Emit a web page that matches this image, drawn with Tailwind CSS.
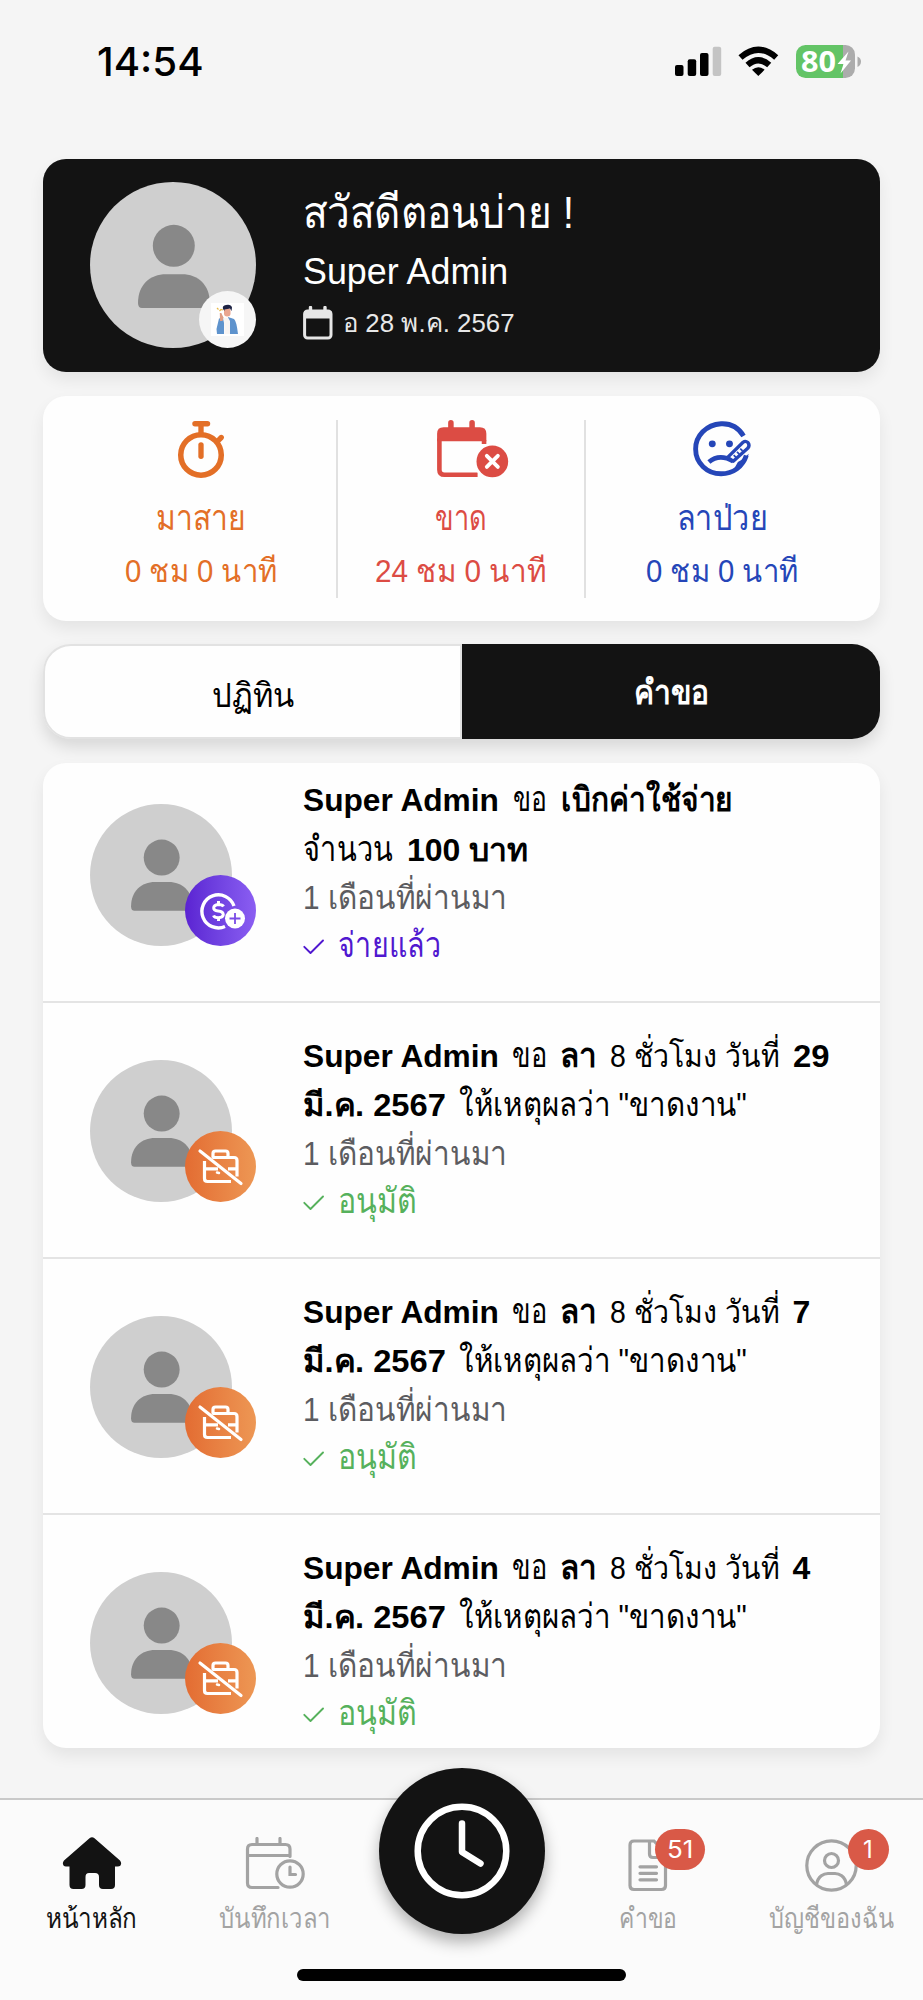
<!DOCTYPE html>
<html lang="th">
<head>
<meta charset="utf-8">
<title>หน้าหลัก</title>
<script src="https://cdn.jsdelivr.net/npm/@tailwindcss/browser@4"></script>
</head>
<body class="bg-[#f5f5f5]">
<svg class="hidden">
  <symbol id="person" viewBox="0 0 166 166">
    <circle cx="83.8" cy="63.8" r="21" fill="#888"/>
    <path d="M52 126Q48 126 48 121C48 103 60 92.3 76 92.3H92C108 92.3 119.8 103 119.8 121Q119.8 126 115.8 126Z" fill="#888"/>
  </symbol>
  <symbol id="check" viewBox="0 0 21 16">
    <path d="M1.3 7.8L7.5 14L20 1.5" fill="none" stroke="currentColor" stroke-width="1.9" stroke-linecap="round" stroke-linejoin="round"/>
  </symbol>
  <symbol id="nowork" viewBox="0 0 71 71">
    <g fill="none" stroke="#fff" stroke-width="3.2" stroke-linejoin="round" stroke-linecap="round">
      <path d="M28 26V22.5Q28 20 30.500 20H40.500Q43 20 43 22.500V26"/>
      <path d="M27.500 26.500H49Q52 26.500 52 29.500V45.500M46 50.500H22.500Q19.500 50.500 19.500 47.500V30" stroke-linecap="butt"/>
      <path d="M20 37.800H33M43 37.800H52" stroke-linecap="butt"/>
      <path d="M32 41.500L34 42" stroke-width="2.500"/>
      <path d="M15 20L56 52.500"/>
    </g>
  </symbol>
</svg>

<div class="relative flex h-[2000px] w-[923px] flex-col overflow-hidden font-['Liberation_Sans',sans-serif] text-black">

  <!-- status bar -->
  <header class="flex h-[124px] shrink-0 items-center justify-between pl-[97px] pr-[61px]">
    <div class="font-['Inter',sans-serif] text-[39.500px] font-medium leading-[50px]"><span data-w="107">14:54</span></div>
    <svg width="188" height="36" viewBox="674 44 188 36">
      <rect x="675" y="65" width="8.500" height="11" rx="2"/>
      <rect x="687.700" y="59.300" width="8.500" height="16.700" rx="2"/>
      <rect x="700" y="53" width="8.500" height="23" rx="2"/>
      <rect x="712.700" y="46.700" width="8.500" height="29.300" rx="2" fill="#c4c4c4"/>
      <path d="M758.300 76L752 69.800Q758.300 64.500 764.600 69.800Z"/>
      <g fill="none" stroke="#000" stroke-width="6.200">
        <path d="M740.500 57.500Q758.300 42 776.200 57.500"/>
        <path d="M747.500 65Q758.300 55.500 769.200 65"/>
      </g>
      <clipPath id="bat"><rect x="796" y="45" width="59" height="33" rx="9.500"/></clipPath>
      <g clip-path="url(#bat)"><rect x="796" y="45" width="47" height="33" fill="#63c466"/><rect x="843" y="45" width="12" height="33" fill="#acacac"/></g>
      <path d="M857.500 56.500Q861 58 861 61.500T857.500 67Z" fill="#acacac"/>
      <text x="801" y="71.500" font-size="29" font-weight="700" font-family="Open Sans" textLength="35" lengthAdjust="spacingAndGlyphs" fill="#fff">80</text>
      <path d="M848.500 51.500L837.500 64H843.500L840.500 73.500L851 60.500H845.500Z" fill="#fff"/>
    </svg>
  </header>

  <main class="flex flex-col px-[43px] pt-[35px]">
    <!-- greeting -->
    <section class="flex h-[213px] rounded-[23px] bg-[#131313] pl-[47px] pt-[23px] text-white shadow-[0_8px_16px_rgba(0,0,0,0.07)]">
      <div class="relative size-[166px] shrink-0 rounded-full bg-[#cfcfcf]">
        <svg class="size-full"><use href="#person"/></svg>
        <div class="absolute bottom-0 right-0 flex size-[57px] items-center justify-center rounded-full bg-[#f6f6f6]">
          <svg width="33" height="33" viewBox="0 0 33 33">
            <rect width="33" height="33" fill="#fff"/>
            <path d="M6 31L5.500 26L8 15.500L12 15L13 20V31ZM17 14L23 16Q25.500 18 27 31H17Z" fill="#5e93cd"/>
            <path d="M13 15L17 14.500L19 18V31H13.500Z" fill="#f8f4f2"/>
            <rect x="13" y="5" width="6.500" height="8.500" rx="3" fill="#e9a58f"/>
            <path d="M9 18L8.800 10L10.300 10L12.500 14.500L11.500 18Z" fill="#dd9d85"/>
            <path d="M12 6Q11 2.500 15 2Q20 1 21 4.500L20.500 8L19 5.500L13.500 6.500V8Z" fill="#1e2344"/>
            <path d="M6 5L7.500 6.500M8.500 8L10 6.500L12 7" stroke="#e8b845" stroke-width="1.200" fill="none"/>
          </svg>
        </div>
      </div>
      <div class="ml-[47px] flex flex-col">
        <div class="-mt-px h-[66px] text-[45px] leading-[64px]"><span data-w="271">สวัสดีตอนบ่าย !</span></div>
        <div class="h-[50px] text-[36px] leading-[50px]"><span data-w="205">Super Admin</span></div>
        <div class="mt-[3px] flex h-[46px] items-center text-[25.500px] leading-[46px] text-[#e8e8e8]">
          <svg class="mr-[10px]" width="30" height="34" viewBox="0 0 30 34"><path d="M7.500 1.500V6M22 1.500V6" stroke="#e6e6e6" stroke-width="3.400" stroke-linecap="round"/><rect x="1.600" y="5" width="26.400" height="27" rx="3" fill="none" stroke="#e6e6e6" stroke-width="3"/><path d="M1 5H28.500V12.500H1Z" fill="#e6e6e6"/></svg>
          <span data-w="172">อ 28 พ.ค. 2567</span>
        </div>
      </div>
    </section>

    <!-- summary -->
    <section class="mt-[24px] flex h-[225px] items-center rounded-[23px] bg-[#fefefe] text-[32px] shadow-[0_8px_16px_rgba(0,0,0,0.07)]">
      <div class="flex h-[178px] w-[295px] flex-col items-center border-r-[2px] border-[#e1e1e1] pl-[23px] text-[#e36f27]">
        <svg width="52" height="63" viewBox="0 0 52 63" fill="none" stroke="currentColor" stroke-linecap="round"><circle cx="26" cy="38" r="22" stroke-width="6"/><path d="M19.500 4H33" stroke-width="6"/><path d="M26 5V14M45.500 21.500L48 19" stroke-width="5.800"/><path d="M26 27V39.500" stroke-width="5.800"/></svg>
        <div class="mt-[10px] h-[58px] text-[35px] leading-[60px]"><span data-w="90">มาสาย</span></div>
        <div class="-mt-[6px] h-[58px] leading-[62px]"><span data-w="152">0 ชม 0 นาที</span></div>
      </div>
      <div class="flex h-[178px] w-[248px] flex-col items-center border-r-[2px] border-[#e1e1e1] text-[#dc4c44]">
        <svg class="ml-[24px]" width="78" height="63" viewBox="0 0 78 63"><path d="M15 3V10M38 3V10" stroke="currentColor" stroke-width="6" stroke-linecap="round"/><path d="M2.500 20V54Q2.500 59.500 8 59.500H44M51 22V26" fill="none" stroke="currentColor" stroke-width="5"/><path d="M0 23V15Q0 8 7 8H46.500Q53.500 8 53.500 15V23Z" fill="currentColor"/><circle cx="60" cy="45" r="20" fill="#fefefe"/><circle cx="60" cy="45" r="17.200" fill="currentColor"/><path d="M54 39L66 51M66 39L54 51" stroke="#fff" stroke-width="4.200" stroke-linecap="round"/></svg>
        <div class="mt-[10px] h-[58px] text-[35px] leading-[60px]"><span data-w="52">ขาด</span></div>
        <div class="-mt-[6px] h-[58px] leading-[62px]"><span data-w="171">24 ชม 0 นาที</span></div>
      </div>
      <div class="flex h-[178px] flex-1 flex-col items-center pr-[22px] text-[#2546b8]">
        <svg width="62" height="62" viewBox="0 0 62 62" fill="none" stroke="currentColor"><path d="M54 17C48 7 39 3.500 30 4C14 5 2.800 17 2.800 31C2.800 46 15 57.500 30 57.500C43 57.500 53 50 57 38" stroke-width="5.200"/><path d="M59.500 36Q54 42 48 45L44 52C52 50 58.500 43 59.500 36Z" fill="currentColor" stroke="none"/><circle cx="20.600" cy="25.500" r="3.700" fill="currentColor" stroke="none"/><circle cx="39" cy="25.500" r="3.700" fill="currentColor" stroke="none"/><path d="M17 45Q28 35.500 43 44" stroke-width="5"/><path d="M37 40L53.500 23.800Q56 21.800 58.700 24Q61 26.800 58.800 30L43 44Z" fill="#fefefe" stroke-width="3.600" stroke-linejoin="round"/><path d="M43.500 37.500L46 40M47 34L49.500 36.500M50.500 30.500L53 33" stroke-width="1.800"/></svg>
        <div class="mt-[10px] h-[58px] text-[35px] leading-[60px]"><span data-w="91">ลาป่วย</span></div>
        <div class="-mt-[6px] h-[58px] leading-[62px]"><span data-w="152">0 ชม 0 นาที</span></div>
      </div>
    </section>

    <!-- tabs -->
    <section class="mt-[23px] flex h-[95px] items-stretch rounded-[28px] text-[34px] shadow-[0_8px_16px_rgba(0,0,0,0.12)]">
      <div class="flex w-[419px] items-center justify-center rounded-l-[28px] border-[2px] border-[#e2e2e2] bg-[#fefefe] pt-[7px] leading-[58px]"><span data-w="82">ปฏิทิน</span></div>
      <div class="flex w-[418px] items-center justify-center rounded-r-[28px] bg-[#131313] font-bold leading-[58px] text-white"><span data-w="75">คำขอ</span></div>
    </section>

    <!-- requests -->
    <section class="mt-[24px] h-[985px] overflow-hidden rounded-[23px] bg-[#fefefe] text-[32px] leading-[49.500px] shadow-[0_8px_16px_rgba(0,0,0,0.07)]">
      <article class="-mt-[16px] flex h-[256px] border-b-[2px] border-[#e4e4e4] pl-[47px]">
        <div class="relative mt-[57px] h-[142px] w-[166px] shrink-0">
          <div class="size-[142px] rounded-full bg-[#cfcfcf]"><svg class="size-full -translate-y-px"><use href="#person"/></svg></div>
          <div class="absolute bottom-0 right-0 size-[71px] rounded-full bg-linear-to-r from-[#5b22d2] to-[#8b5ef2]">
            <svg class="size-full" viewBox="0 0 71 71" fill="none" stroke="#fff"><path d="M49 31A16.500 16.500 0 1 0 40 51.500" stroke-width="3.400"/><path d="M38.500 31.500Q37.500 29.500 33.500 29.500Q28.700 30 28.700 33Q28.700 35.500 33 36Q38.300 36.500 38.300 39.700Q38 42.500 33.500 42.800Q29.500 42.800 28.500 40.500M33.500 26V29M33.500 43V46" stroke-width="3"/><circle cx="50" cy="43.500" r="10" fill="#fff" stroke="none"/><path d="M50 38V49M44.500 43.500H55.500" stroke="#7a4be6" stroke-width="1.800"/></svg>
          </div>
        </div>
        <div class="ml-[47px] pt-[27px]">
          <div class="flex h-[49.500px] items-baseline gap-[14px]"><b data-w="196">Super Admin</b><span class="text-[35px]" data-w="34">ขอ</span><b class="text-[34px]" data-w="172">เบิกค่าใช้จ่าย</b></div>
          <div class="flex h-[49.500px] items-baseline gap-[14px]"><span class="text-[35px]" data-w="90">จำนวน</span><b data-w="121">100 บาท</b></div>
          <div class="flex h-[49.500px] text-[33px] text-[#5c5c60]"><span data-w="205">1 เดือนที่ผ่านมา</span></div>
          <div class="flex h-[48px] text-[35px] leading-[43px] text-[#5018d0]"><svg class="mr-[14px] mt-[16px] h-[16px] w-[21px]"><use href="#check"/></svg><span data-w="103">จ่ายแล้ว</span></div>
        </div>
      </article>

      <article class="flex h-[256px] border-b-[2px] border-[#e4e4e4] pl-[47px]">
        <div class="relative mt-[57px] h-[142px] w-[166px] shrink-0">
          <div class="size-[142px] rounded-full bg-[#cfcfcf]"><svg class="size-full -translate-y-px"><use href="#person"/></svg></div>
          <div class="absolute bottom-0 right-0 size-[71px] rounded-full bg-linear-to-r from-[#e36c32] to-[#ed9754]"><svg class="size-full"><use href="#nowork"/></svg></div>
        </div>
        <div class="ml-[47px] pt-[27px]">
          <div class="flex h-[49.500px] items-baseline gap-[13px]"><b data-w="196">Super Admin</b><span class="text-[35px]" data-w="35">ขอ</span><b class="text-[34px]" data-w="37">ลา</b><span data-w="170">8 ชั่วโมง วันที่</span><b data-w="37">29</b></div>
          <div class="flex h-[49.500px] items-baseline gap-[13px]"><b data-w="143">มี.ค. 2567</b><span class="text-[34px]" data-w="288">ให้เหตุผลว่า "ขาดงาน"</span></div>
          <div class="flex h-[49.500px] text-[33px] text-[#5c5c60]"><span data-w="205">1 เดือนที่ผ่านมา</span></div>
          <div class="flex h-[48px] text-[35px] leading-[43px] text-[#56b15c]"><svg class="mr-[14px] mt-[16px] h-[16px] w-[21px]"><use href="#check"/></svg><span data-w="79">อนุมัติ</span></div>
        </div>
      </article>

      <article class="flex h-[256px] border-b-[2px] border-[#e4e4e4] pl-[47px]">
        <div class="relative mt-[57px] h-[142px] w-[166px] shrink-0">
          <div class="size-[142px] rounded-full bg-[#cfcfcf]"><svg class="size-full -translate-y-px"><use href="#person"/></svg></div>
          <div class="absolute bottom-0 right-0 size-[71px] rounded-full bg-linear-to-r from-[#e36c32] to-[#ed9754]"><svg class="size-full"><use href="#nowork"/></svg></div>
        </div>
        <div class="ml-[47px] pt-[27px]">
          <div class="flex h-[49.500px] items-baseline gap-[13px]"><b data-w="196">Super Admin</b><span class="text-[35px]" data-w="35">ขอ</span><b class="text-[34px]" data-w="37">ลา</b><span data-w="170">8 ชั่วโมง วันที่</span><b data-w="18">7</b></div>
          <div class="flex h-[49.500px] items-baseline gap-[13px]"><b data-w="143">มี.ค. 2567</b><span class="text-[34px]" data-w="288">ให้เหตุผลว่า "ขาดงาน"</span></div>
          <div class="flex h-[49.500px] text-[33px] text-[#5c5c60]"><span data-w="205">1 เดือนที่ผ่านมา</span></div>
          <div class="flex h-[48px] text-[35px] leading-[43px] text-[#56b15c]"><svg class="mr-[14px] mt-[16px] h-[16px] w-[21px]"><use href="#check"/></svg><span data-w="79">อนุมัติ</span></div>
        </div>
      </article>

      <article class="flex h-[256px] pl-[47px]">
        <div class="relative mt-[57px] h-[142px] w-[166px] shrink-0">
          <div class="size-[142px] rounded-full bg-[#cfcfcf]"><svg class="size-full -translate-y-px"><use href="#person"/></svg></div>
          <div class="absolute bottom-0 right-0 size-[71px] rounded-full bg-linear-to-r from-[#e36c32] to-[#ed9754]"><svg class="size-full"><use href="#nowork"/></svg></div>
        </div>
        <div class="ml-[47px] pt-[27px]">
          <div class="flex h-[49.500px] items-baseline gap-[13px]"><b data-w="196">Super Admin</b><span class="text-[35px]" data-w="35">ขอ</span><b class="text-[34px]" data-w="37">ลา</b><span data-w="170">8 ชั่วโมง วันที่</span><b data-w="18">4</b></div>
          <div class="flex h-[49.500px] items-baseline gap-[13px]"><b data-w="143">มี.ค. 2567</b><span class="text-[34px]" data-w="288">ให้เหตุผลว่า "ขาดงาน"</span></div>
          <div class="flex h-[49.500px] text-[33px] text-[#5c5c60]"><span data-w="205">1 เดือนที่ผ่านมา</span></div>
          <div class="flex h-[48px] text-[35px] leading-[43px] text-[#56b15c]"><svg class="mr-[14px] mt-[16px] h-[16px] w-[21px]"><use href="#check"/></svg><span data-w="79">อนุมัติ</span></div>
        </div>
      </article>
    </section>
  </main>

  <!-- bottom navigation -->
  <nav class="relative mt-auto flex h-[202px] shrink-0 border-t-[2px] border-[#c9c9c9] bg-[#fbfbfb] text-[28px] leading-[40px] text-[#a3a3a3]">
    <div class="flex w-[183px] flex-col items-center pt-[37px] text-[#131313]">
      <svg width="60" height="53" viewBox="0 0 60 53" fill="currentColor"><path d="M27.500 1.200Q30 -.5 32.500 1.200L58 23.500Q60 26 58.500 28.500Q57.500 29.500 55.500 29.500H53V48Q53 52 49 52H41Q37 52 37 48V40Q37 36 33 36H27Q23.500 36 23.500 40V48Q23.500 52 19.500 52H11.500Q7.500 52 7.500 48V29.500H4Q2.500 29.500 1.500 28.500Q0 26 2 23.500Z"/></svg>
      <div class="mt-[9px] h-[40px]"><span data-w="91">หน้าหลัก</span></div>
    </div>
    <div class="flex w-[183px] flex-col items-center pt-[37px]">
      <svg width="60" height="53" viewBox="0 0 60 53" fill="none" stroke="currentColor" stroke-width="3.200" stroke-linecap="round"><path d="M12 1.500V7M35 1.500V7M45 19.500V12Q45 7.500 40.500 7.500H7Q2.500 7.500 2.500 12V46Q2.500 50.500 7 50.500H33M2.500 18.500H44"/><circle cx="45" cy="37" r="13.200"/><path d="M45 30V37.500H50.500"/></svg>
      <div class="mt-[9px] h-[40px]"><span data-w="112">บันทึกเวลา</span></div>
    </div>
    <div class="w-[191px]"></div>
    <div class="flex w-[182px] flex-col items-center pt-[39px]">
      <div class="relative">
        <svg width="40" height="53" viewBox="0 0 40 53" fill="none" stroke="currentColor" stroke-width="3.200" stroke-linecap="round"><path d="M26 2H6Q2 2 2 6V46.500Q2 50.500 6 50.500H33.500Q37.500 50.500 37.500 46.500V14L26 2ZM21.500 3V15Q21.500 18.500 25 18.500H37M12 27.800H28.500M12 34.300H28.500M12 40.800H28.500"/></svg>
        <div class="absolute -top-[10px] left-[27px] flex h-[41px] w-[50px] items-center justify-center rounded-full bg-[#d95947] font-['Inter',sans-serif] text-[24px] text-white"><span data-w="26">51</span></div>
      </div>
      <div class="mt-[7px] h-[40px]"><span data-w="58">คำขอ</span></div>
    </div>
    <div class="flex w-[184px] flex-col items-center pt-[39px]">
      <div class="relative">
        <svg width="53" height="53" viewBox="0 0 53 53" fill="none" stroke="currentColor" stroke-width="3.200"><circle cx="26.500" cy="26.500" r="24.700"/><circle cx="26.500" cy="21.500" r="7"/><path d="M11.500 45.500C13 37 19 34.500 23 34.500H30C34 34.500 40 37 41.500 45.500"/></svg>
        <div class="absolute -top-[10px] left-[43px] flex size-[41px] items-center justify-center rounded-full bg-[#d95947] font-['Inter',sans-serif] text-[24px] text-white">1</div>
      </div>
      <div class="mt-[7px] h-[40px]"><span data-w="125">บัญชีของฉัน</span></div>
    </div>
    <div class="absolute -top-[32px] left-[379px] flex size-[166px] items-center justify-center rounded-full bg-[#131313] shadow-[0_8px_16px_rgba(0,0,0,0.3)]">
      <svg width="96" height="96" viewBox="0 0 96 96" fill="none" stroke="#fff" stroke-width="6.500" stroke-linecap="round" stroke-linejoin="round"><circle cx="48" cy="48" r="44.300"/><path d="M48 20.500V49L66.500 60.500"/></svg>
    </div>
    <div class="absolute bottom-[19px] left-[297px] h-[12px] w-[329px] rounded-full bg-black"></div>
  </nav>
</div>

<script>
  // offsetWidth ignores transforms, so refitting after a style change is safe.
  const fit = el => {
    const w = +el.dataset.w, n = el.offsetWidth;
    if (!n) return;
    el.style.transform = 'scaleX(' + w / n + ')';
    el.style.marginRight = (w - n) + 'px';
  };
  const labels = document.querySelectorAll('[data-w]');
  const watcher = new ResizeObserver(entries => entries.forEach(e => fit(e.target)));
  labels.forEach(el => {
    el.style.display = 'inline-block';
    el.style.whiteSpace = 'nowrap';
    el.style.transformOrigin = '0 50%';
    el.style.flexShrink = '0';
    fit(el);
    watcher.observe(el);
  });
  window.addEventListener('load', () => labels.forEach(fit));
</script>
</body>
</html>
